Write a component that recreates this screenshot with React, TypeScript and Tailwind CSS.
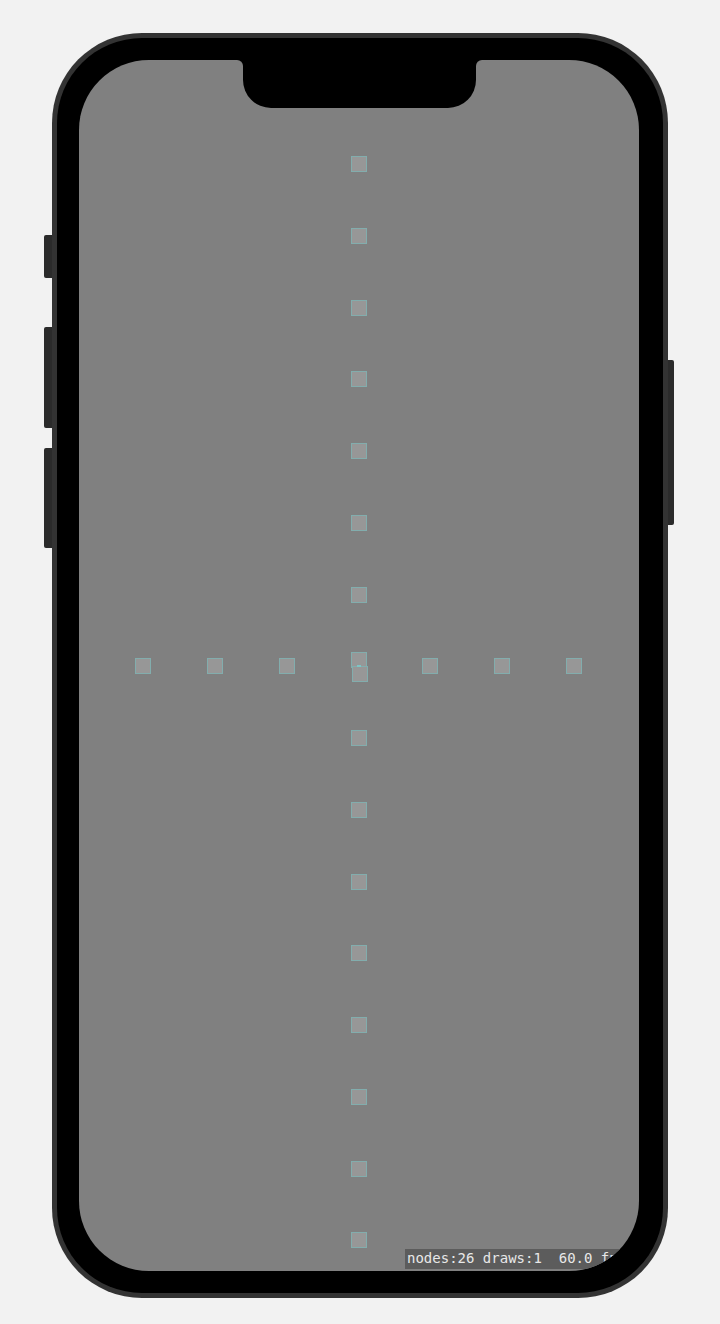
// scene nodes: one vertical column and one horizontal row crossing at the centre
function Node({ className = '' }: { className?: string }) {
  return <div className={'w-4 h-4 bg-[#979797] border border-[#7db3b3]/80 ' + className} />
}

export default function App() {
  return (
    <div className="min-h-[1324px] bg-[#f2f2f2] pt-[33px]">
      <div className="relative mx-auto w-[616px] h-[1265px]">
        {/* side buttons */}
        <div className="absolute -left-2 top-[202px] w-2 h-[43px] bg-[#2b2b2b] rounded-l-[2px]" />
        <div className="absolute -left-2 top-[294px] w-2 h-[101px] bg-[#2b2b2b] rounded-l-[2px]" />
        <div className="absolute -left-2 top-[415px] w-2 h-[100px] bg-[#2b2b2b] rounded-l-[2px]" />
        <div className="absolute -right-[6px] top-[327px] w-[6px] h-[165px] bg-[#2b2b2b] rounded-r-[2px]" />

        <div className="h-full rounded-[90px] bg-[#333333] p-[5px]">
          <div className="h-full rounded-[85px] bg-black pl-[22px] pr-[24px] py-[22px]">
            <div className="relative h-full rounded-[70px] bg-[#808080] overflow-hidden">
              {/* notch */}
              <div className="absolute top-0 inset-x-0 flex justify-center">
                <div className="w-[6px] h-[6px] bg-black">
                  <div className="w-full h-full bg-[#808080] rounded-tr-[6px]" />
                </div>
                <div className="w-[233px] h-[48px] bg-black rounded-b-[28px]" />
                <div className="w-[6px] h-[6px] bg-black">
                  <div className="w-full h-full bg-[#808080] rounded-tl-[6px]" />
                </div>
              </div>

              {/* column */}
              <div className="absolute left-[272px] top-[96px] flex flex-col gap-[55.75px]">
                {Array.from({ length: 7 }, (_, i) => (
                  <Node key={'a' + i} />
                ))}
                <div className="relative w-4 h-4">
                  <Node className="absolute left-0 -top-[6px]" />
                  <Node className="absolute left-px top-2" />
                  <div className="absolute left-[6px] top-[7px] w-[4px] h-[2px] bg-[#7fc4c4]" />
                </div>
                {Array.from({ length: 8 }, (_, i) => (
                  <Node key={'b' + i} />
                ))}
              </div>

              {/* row */}
              <div className="absolute left-[56px] top-[598px] flex gap-[55.75px]">
                <Node />
                <Node />
                <Node />
                <div className="w-4 h-4" />
                <Node />
                <Node />
                <Node />
              </div>

              <div className="absolute left-[326px] top-[1189px] h-5 pl-[2px] pr-2 bg-[#5c5c5c] text-[#e8e8e8] text-[14px] leading-[19px] whitespace-pre font-['DejaVu_Sans_Mono',monospace]">
                nodes:26 draws:1  60.0 fps
              </div>
            </div>
          </div>
        </div>
      </div>
    </div>
  )
}
